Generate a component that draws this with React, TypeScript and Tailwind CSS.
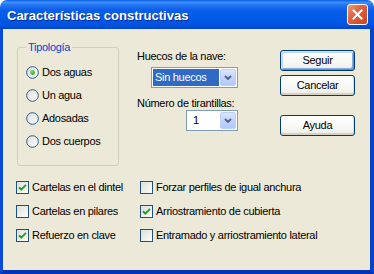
import React from "react";

function Radio({ checked }: { checked?: boolean }) {
  return (
    <svg width="13" height="13" viewBox="0 0 13 13" className="shrink-0">
      <defs>
        <linearGradient id="rg" x1="0" y1="0" x2="1" y2="1">
          <stop offset="0" stopColor="#DCDCD7" />
          <stop offset="1" stopColor="#FFFFFF" />
        </linearGradient>
        <radialGradient id="rd" cx="0.4" cy="0.35" r="0.7">
          <stop offset="0" stopColor="#7FE27C" />
          <stop offset="1" stopColor="#1E9A1E" />
        </radialGradient>
      </defs>
      <circle cx="6.5" cy="6.5" r="5.8" fill="url(#rg)" stroke="#2A5A8E" strokeWidth="1" />
      {checked && <circle cx="6.5" cy="6.5" r="2.4" fill="url(#rd)" />}
    </svg>
  );
}

function Check({ checked }: { checked?: boolean }) {
  return (
    <svg width="13" height="13" viewBox="0 0 13 13" className="shrink-0">
      <defs>
        <linearGradient id="cg" x1="0" y1="0" x2="1" y2="1">
          <stop offset="0" stopColor="#DCDCD7" />
          <stop offset="1" stopColor="#FFFFFF" />
        </linearGradient>
      </defs>
      <rect x="0.5" y="0.5" width="12" height="12" fill="url(#cg)" stroke="#1C5180" />
      {checked && (
        <polyline points="3,6.2 5.3,8.6 10,3.9" fill="none" stroke="#21A121" strokeWidth="2" />
      )}
    </svg>
  );
}

function RadioRow({ label, checked }: { label: string; checked?: boolean }) {
  return (
    <div className="flex items-center gap-[3px] h-[13px]">
      <Radio checked={checked} />
      <span>{label}</span>
    </div>
  );
}

function CheckRow({ label, checked }: { label: string; checked?: boolean }) {
  return (
    <div className="flex items-center gap-[3px] h-[13px] whitespace-nowrap">
      <Check checked={checked} />
      <span>{label}</span>
    </div>
  );
}

function Chevron() {
  return (
    <svg width="8" height="5" viewBox="0 0 8 5">
      <polyline points="1,1 4,4 7,1" fill="none" stroke="#4D6185" strokeWidth="1.8" />
    </svg>
  );
}

function Combo({ text, width, selected }: { text: string; width: string; selected?: boolean }) {
  return (
    <div className={`${width} h-[21px] border border-[#7F9DB9] bg-white flex p-[1px] gap-[1px]`}>
      <div
        className={`flex-1 flex items-center pl-[2px] ${
          selected ? "bg-[#316AC5] text-white" : "text-black pl-[5px]"
        }`}
      >
        {text}
      </div>
      <div className="w-[16px] rounded-[2px] border border-[#BAD0FB] bg-[linear-gradient(180deg,#DCE6FE_0%,#C3D4FC_50%,#B3C8F8_100%)] flex items-center justify-center">
        <Chevron />
      </div>
    </div>
  );
}

function Btn({ label, def }: { label: string; def?: boolean }) {
  return (
    <button
      className={`w-[75px] h-[21px] rounded-[3px] border border-[#003C74] bg-[linear-gradient(180deg,#FFFFFF_0%,#F7F7F4_60%,#ECEBE6_100%)] text-black flex items-center justify-center ${
        def
          ? "shadow-[inset_1px_1px_0_#CEE7FF,inset_-1px_-1px_0_#6982EE,inset_2px_2px_0_#BCD4F6,inset_-2px_-2px_0_#89ADE4]"
          : "shadow-[inset_0_-2px_0_#D6D0C5,inset_-1px_0_0_#E2DED5]"
      }`}
    >
      {label}
    </button>
  );
}

export default function App() {
  return (
    <div className="w-[374px] h-[274px] flex flex-col bg-white font-['Liberation_Sans',Arial,sans-serif] text-[11px] leading-[13px] tracking-[-0.3px] text-black">
      {/* Title bar */}
      <div className="h-[29px] rounded-t-[7px] bg-[linear-gradient(180deg,#0A5FE6_0%,#3E8FF8_9%,#2675F2_16%,#0A5FE9_35%,#0058E6_70%,#0053DF_88%,#0043C8_100%)] flex items-center pl-[7px] pr-[6px] shrink-0">
        <span className="text-white font-bold text-[13px] tracking-normal [text-shadow:1px_1px_#0A2A9A] flex-1 pt-[1px]">
          Características constructivas
        </span>
        <div className="w-[21px] h-[21px] rounded-[3px] border border-white bg-[linear-gradient(135deg,#EE9A80_0%,#E2623F_40%,#CC4420_100%)] flex items-center justify-center">
          <svg width="11" height="11" viewBox="0 0 11 11">
            <path d="M1.5 1.5 L9.5 9.5 M9.5 1.5 L1.5 9.5" stroke="white" strokeWidth="2" strokeLinecap="square" />
          </svg>
        </div>
      </div>

      {/* Body */}
      <div className="flex-1 bg-[#ECE9D8] border-l-[3px] border-r-[4px] border-b-[4px] border-l-[#0A4BDC] border-r-[#0842C8] border-b-[#0033B8] flex flex-col">
        <div className="flex pt-[12px] pl-[14px]">
          <fieldset className="w-[102px] h-[125px] border border-[#D0D0BF] rounded-[3px] px-[8px] flex flex-col gap-[10px] pt-[12px]">
            <legend className="px-[2px] ml-[0px] text-[#0046D5]">Tipología</legend>
            <RadioRow label="Dos aguas" checked />
            <RadioRow label="Un agua" />
            <RadioRow label="Adosadas" />
            <RadioRow label="Dos cuerpos" />
          </fieldset>

          <div className="ml-[18px] mt-[9px] w-[101px] flex flex-col">
            <div className="whitespace-nowrap">Huecos de la nave:</div>
            <div className="flex justify-end mt-[4px]">
              <Combo text="Sin huecos" width="w-[87px]" selected />
            </div>
            <div className="whitespace-nowrap mt-[9px]">Número de tirantillas:</div>
            <div className="flex justify-end mt-[0px]">
              <Combo text="1" width="w-[52px]" />
            </div>
          </div>

          <div className="ml-[42px] mt-[9px] flex flex-col">
            <Btn label="Seguir" def />
            <div className="mt-[4px]">
              <Btn label="Cancelar" />
            </div>
            <div className="mt-[19px]">
              <Btn label="Ayuda" />
            </div>
          </div>
        </div>

        <div className="grid grid-cols-[124px_auto] gap-y-[11px] pl-[13px] mt-[15px]">
          <CheckRow label="Cartelas en el dintel" checked />
          <CheckRow label="Forzar perfiles de igual anchura" />
          <CheckRow label="Cartelas en pilares" />
          <CheckRow label="Arriostramiento de cubierta" checked />
          <CheckRow label="Refuerzo en clave" checked />
          <CheckRow label="Entramado y arriostramiento lateral" />
        </div>
      </div>
    </div>
  );
}
